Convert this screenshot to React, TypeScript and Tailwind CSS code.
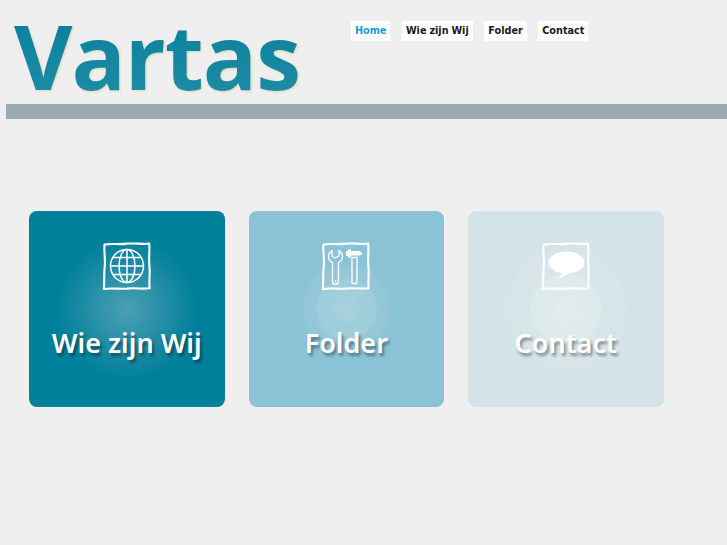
import React from "react";

function Frame() {
  return (
    <path
      d="M2.5 3.5 C10 2.2 18 3.9 25 2.6 C33 1.8 41 3.7 47.2 2.5 C47.9 10 46.5 18 47.5 26 C48.2 33 46.7 41 47.7 47.3 C40 48.3 33 46.6 25 47.6 C17 48.2 9 46.7 1.8 48 C2.8 40 1.6 33 2.8 25 C3.4 17 1.8 10 2.5 3.5 Z"
      fill="none"
      stroke="#fff"
      strokeWidth="2.1"
      strokeLinejoin="round"
    />
  );
}

function GlobeIcon() {
  return (
    <svg width="50" height="50" viewBox="0 0 50 50">
      <Frame />
      <g fill="none" stroke="#fff" strokeWidth="1.5">
        <circle cx="25" cy="25" r="16.5" />
        <ellipse cx="25" cy="25" rx="8" ry="16.5" />
        <path d="M25 8.5V41.5M8.5 25H41.5M11 16.5H39M11 33.5H39" />
      </g>
    </svg>
  );
}

function ToolsIcon() {
  return (
    <svg width="50" height="50" viewBox="0 0 50 50">
      <Frame />
      <path
        d="M11 9.5 C8.5 11 7.5 13 7.5 15.5 C7.5 18.5 9.5 20.5 11.5 21.5 L11.5 41 C11.5 44 17.5 44 17.5 41 L17.5 21.5 C19.5 20.5 21.5 18.5 21.5 15.5 C21.5 13 20.5 11 18 9.5 L18 15 L14.5 17 L11 15 Z"
        fill="none"
        stroke="#fff"
        strokeWidth="1.3"
        strokeLinejoin="round"
      />
      <circle cx="14.5" cy="40" r="1" fill="#fff" />
      <path d="M25 10H27V8.5H30V10H37C39 10 41 11.5 41.5 13.5L38 14.5H30V16.5H27V15H25Z" fill="#fff" />
      <path d="M31 16.5H36V41.5C36 43 31 43 31 41.5Z" fill="none" stroke="#fff" strokeWidth="1.3" />
    </svg>
  );
}

function BubbleIcon() {
  return (
    <svg width="50" height="50" viewBox="0 0 50 50">
      <Frame />
      <ellipse cx="25.5" cy="21.5" rx="18" ry="11" fill="#fff" />
      <path d="M22 30 L18 37.5 L30 31.5 Z" fill="#fff" />
    </svg>
  );
}

function Card({ bg, label, icon }: { bg: string; label: string; icon: React.ReactNode }) {
  return (
    <a className={`flex h-[196px] w-[195.5px] flex-col items-center rounded-lg pt-[30px] ${bg}`}>
      {icon}
      <span className="mt-[34px] font-['Noto_Sans',sans-serif] text-[27px] leading-[36px] font-semibold text-white [text-shadow:2px_3px_3px_rgba(0,0,0,0.4)]">
        {label}
      </span>
    </a>
  );
}

function NavItem({ label, active }: { label: string; active?: boolean }) {
  return (
    <a
      className={`flex h-5 items-center bg-white px-1 font-['DejaVu_Sans',sans-serif] text-[9.7px] font-bold [word-spacing:-0.5px] ${
        active ? "text-[#1b9ad8]" : "text-[#1a1a1a]"
      }`}
    >
      {label}
    </a>
  );
}

export default function App() {
  return (
    <div className="h-[545px] w-[727px] overflow-hidden bg-[#efefef]">
      <header className="flex h-[104px]">
        <div className="ml-[14px] w-[337px] drop-shadow-[1px_1px_1px_#d9d5b4]">
          <span className="block bg-gradient-to-b from-[#00809b] to-[#1f8ca5] bg-clip-text pt-[6px] font-['Open_Sans',sans-serif] text-[90px] leading-[98px] font-bold tracking-[-1px] text-transparent">
            Vartas
          </span>
        </div>
        <nav className="mt-[21px] flex items-start gap-[11.5px]">
          <NavItem label="Home" active />
          <NavItem label="Wie zijn Wij" />
          <NavItem label="Folder" />
          <NavItem label="Contact" />
        </nav>
      </header>
      <div className="ml-[6px] h-[15px] bg-[#9aa8b2]" />
      <main className="flex gap-[24px] pt-[92px] pl-[29px]">
        <Card
          label="Wie zijn Wij"
          icon={<GlobeIcon />}
          bg="bg-[radial-gradient(circle_72px_at_50%_50%,#4b9fb3_0%,#2e93aa_40%,#12879f_75%,#00809b_100%)]"
        />
        <Card
          label="Folder"
          icon={<ToolsIcon />}
          bg="bg-[radial-gradient(circle_60px_at_50%_50%,#a7d1df_0%,#a4cfdd_22%,#a1cedc_23%,#9dccdb_50%,#95c8d9_51%,#91c6d8_72%,#8cc4d6_73%,#8ac3d6_100%)]"
        />
        <Card
          label="Contact"
          icon={<BubbleIcon />}
          bg="bg-[radial-gradient(circle_61px_at_50%_50%,#e3eded_0%,#e2eced_19%,#dfeaec_20%,#deeaec_57%,#d8e6e9_58%,#d7e5e9_99%,#d4e3e8_100%)]"
        />
      </main>
    </div>
  );
}
